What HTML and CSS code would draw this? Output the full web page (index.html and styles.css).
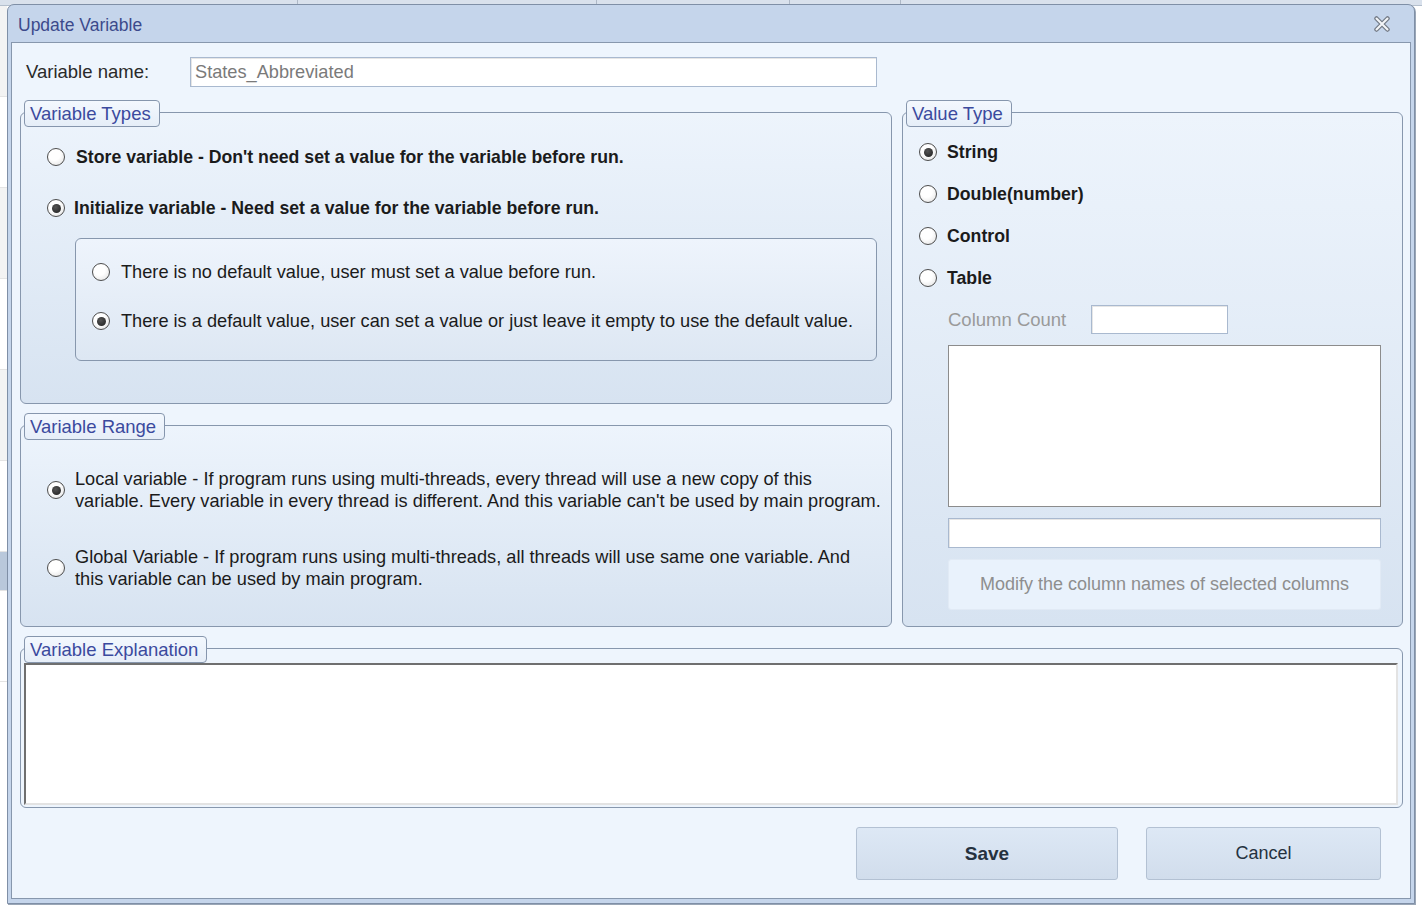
FILE: index.html
```html
<!DOCTYPE html>
<html lang="en">
<head>
    <meta charset="UTF-8">
    <title>Update Variable</title>
    <link rel="stylesheet" href="styles.css">
</head>
<body>
    <div class="backdrop">
        <div class="bg-head">
            <span class="bg-col c1"></span>
            <span class="bg-col c2"></span>
            <span class="bg-col c3"></span>
            <span class="bg-col c4"></span>
        </div>
        <div class="bg-rows">
            <div class="bg-row alt"></div>
            <div class="bg-row"></div>
            <div class="bg-row alt"></div>
            <div class="bg-row"></div>
            <div class="bg-row alt"></div>
            <div class="bg-row"></div>
            <div class="bg-row sel"></div>
            <div class="bg-row"></div>
        </div>
    </div>

    <div class="dialog">
        <div class="titlebar">
            <span class="title">Update Variable</span>
            <svg class="close" width="18" height="16" viewBox="0 0 18 16">
                <path d="M3.5 2.5 L14.5 13.5 M14.5 2.5 L3.5 13.5" stroke="#737a85" stroke-width="4.5" stroke-linecap="round"/>
                <path d="M3.5 2.5 L14.5 13.5 M14.5 2.5 L3.5 13.5" stroke="#f4f6f9" stroke-width="2" stroke-linecap="round"/>
            </svg>
        </div>

        <div class="client">
            <div class="name-row">
                <label class="name-label">Variable name:</label>
                <div class="text-input name-input">States_Abbreviated</div>
            </div>

            <div class="main-grid">
                <div class="left-col">
                    <div class="group types">
                        <div class="legend">Variable Types</div>
                        <div class="opt bold"><span class="radio"></span>Store variable - Don't need set a value for the variable before run.</div>
                        <div class="opt bold second"><span class="radio on"></span>Initialize variable - Need set a value for the variable before run.</div>
                        <div class="inner-box">
                            <div class="opt"><span class="radio"></span>There is no default value, user must set a value before run.</div>
                            <div class="opt second-sub"><span class="radio on"></span>There is a default value, user can set a value or just leave it empty to use the default value.</div>
                        </div>
                    </div>

                    <div class="group range">
                        <div class="legend">Variable Range</div>
                        <div class="opt wrap"><span class="radio on"></span><span class="lines">Local variable - If program runs using multi-threads, every thread will use a new copy of this<br>variable. Every variable in every thread is different. And this variable can't be used by main program.</span></div>
                        <div class="opt wrap second-range"><span class="radio"></span><span class="lines">Global Variable - If program runs using multi-threads, all threads will use same one variable. And<br>this variable can be used by main program.</span></div>
                    </div>
                </div>

                <div class="group value-type">
                    <div class="legend">Value Type</div>
                    <div class="opt bold vt"><span class="radio on"></span>String</div>
                    <div class="opt bold vt"><span class="radio"></span>Double(number)</div>
                    <div class="opt bold vt"><span class="radio"></span>Control</div>
                    <div class="opt bold vt"><span class="radio"></span>Table</div>
                    <div class="col-count">
                        <span class="muted">Column Count</span>
                        <div class="text-input count-input"></div>
                    </div>
                    <div class="list-box"></div>
                    <div class="text-input col-name"></div>
                    <div class="flat-btn">Modify the column names of selected columns</div>
                </div>
            </div>

            <div class="group explain">
                <div class="legend">Variable Explanation</div>
                <div class="text-area"></div>
            </div>

            <div class="buttons">
                <button class="btn save">Save</button>
                <button class="btn cancel">Cancel</button>
            </div>
        </div>
    </div>
</body>
</html>
```

FILE: styles.css
```css
body {
    margin: 0;
    padding: 4px 0 0 7px;
    font-family: "Liberation Sans", Arial, sans-serif;
    background: #ffffff;
    color: #1b1b1b;
    position: relative;
    height: 910px;
    overflow: hidden;
}
.backdrop {
    position: absolute;
    top: 0;
    left: 0;
    width: 1422px;
    height: 914px;
}
.bg-head {
    display: flex;
    height: 5px;
    background: #d9e1ec;
    border-bottom: 1px solid #b4bfcd;
}
.bg-col {
    border-right: 1px solid #aeb8c6;
}
.bg-col.c1 { width: 297px; }
.bg-col.c2 { width: 298px; }
.bg-col.c3 { width: 192px; }
.bg-col.c4 { width: 110px; }
.bg-rows {
    width: 7px;
}
.bg-row {
    height: 90px;
    background: #ffffff;
    border-bottom: 1px solid #e4e4e4;
}
.bg-row.alt {
    background: #f3f3f3;
}
.bg-row.sel {
    height: 38px;
    background: #b9c8db;
}
.dialog {
    position: relative;
    width: 1408px;
    height: 900px;
    box-sizing: border-box;
    border: 1px solid #7f8fa6;
    border-radius: 7px 7px 0 0;
    background: #c5d5eb;
    padding: 0 3px 4px 3px;
    display: flex;
    flex-direction: column;
    box-shadow: 1px 1px 0 #9aa6b6;
}
.titlebar {
    height: 37px;
    flex: none;
    display: flex;
    align-items: center;
    justify-content: space-between;
    padding: 3px 20px 0 7px;
    box-sizing: border-box;
}
.title {
    font-size: 17.5px;
    color: #3c4a8c;
}
.close {
    margin-top: -2px;
}
.client {
    flex: 1;
    border: 1px solid #8797ad;
    background: #eef5fd;
    padding: 0 7px 0 8px;
    display: flex;
    flex-direction: column;
}
.name-row {
    display: flex;
    align-items: center;
    margin-top: 14px;
    padding-left: 6px;
    height: 30px;
}
.name-label {
    width: 164px;
    font-size: 18.5px;
    color: #2a2a2a;
}
.text-input {
    box-sizing: border-box;
    background: #ffffff;
    border: 1px solid #a9b9cf;
    box-shadow: inset 1px 1px 0 #e6e6e6;
}
.name-input {
    width: 687px;
    height: 30px;
    padding: 0 4px;
    line-height: 28px;
    font-size: 18.2px;
    color: #7a7a7a;
}
.main-grid {
    display: grid;
    grid-template-columns: 872px 1fr;
    column-gap: 10px;
    margin-top: 25px;
}
.left-col {
    display: flex;
    flex-direction: column;
    gap: 21px;
}
.group {
    position: relative;
    box-sizing: border-box;
    border: 1px solid #8797ad;
    border-radius: 6px;
    background: linear-gradient(#edf4fc, #d7e3f1);
}
.legend {
    position: absolute;
    top: -13px;
    left: 3px;
    height: 27px;
    box-sizing: border-box;
    padding: 0 8px 0 5px;
    border: 1px solid #8696ad;
    border-radius: 4px;
    background: linear-gradient(#f3f8fe, #e6eef8);
    color: #3b4a9e;
    font-size: 18.5px;
    line-height: 25px;
    white-space: nowrap;
}
.opt {
    display: flex;
    align-items: center;
    height: 22px;
    font-size: 18.2px;
    white-space: nowrap;
    gap: 11px;
}
.opt.bold {
    font-weight: bold;
    font-size: 17.7px;
}
.radio {
    flex: none;
    width: 18px;
    height: 18px;
    box-sizing: border-box;
    border: 1.5px solid #4d4d4d;
    border-radius: 50%;
    background: radial-gradient(circle at 40% 35%, #ffffff 40%, #dedede);
    display: flex;
    align-items: center;
    justify-content: center;
}
.radio.on::after {
    content: "";
    width: 9px;
    height: 9px;
    border-radius: 50%;
    background: radial-gradient(circle at 40% 35%, #555555, #1d1d1d);
}
.types {
    height: 292px;
    padding: 33px 14px 0 26px;
}
.types .second {
    margin-top: 29px;
}
.types .second {
    gap: 9px;
}
.inner-box {
    margin: 19px 0 0 28px;
    height: 123px;
    box-sizing: border-box;
    border: 1px solid #8797ad;
    border-radius: 6px;
    background: linear-gradient(#eef4fc, #dde7f3);
    padding: 22px 0 0 16px;
}
.inner-box .second-sub {
    margin-top: 27px;
}
.range {
    height: 202px;
    padding: 42px 0 0 26px;
}
.opt.wrap {
    height: 44px;
    gap: 10px;
}
.lines {
    line-height: 22px;
}
.range .second-range {
    margin-top: 34px;
}
.value-type {
    padding: 28px 21px 0 16px;
}
.opt.vt {
    gap: 10px;
    margin-bottom: 20px;
}
.col-count {
    display: flex;
    align-items: center;
    margin: -4px 0 0 29px;
    height: 29px;
}
.muted {
    width: 143px;
    font-size: 18.5px;
    color: #9a9a9a;
    white-space: nowrap;
}
.count-input {
    width: 137px;
    height: 29px;
}
.list-box {
    margin: 11px 0 0 29px;
    height: 162px;
    box-sizing: border-box;
    background: #ffffff;
    border: 1px solid #8c8c8c;
}
.col-name {
    margin: 11px 0 0 29px;
    height: 30px;
}
.flat-btn {
    margin: 11px 0 0 29px;
    height: 51px;
    border-radius: 3px;
    background: #e9f2fc;
    border: 1px solid #e1eaf5;
    box-sizing: border-box;
    display: flex;
    align-items: center;
    justify-content: center;
    font-size: 18px;
    color: #8e8e8e;
    white-space: nowrap;
}
.explain {
    margin-top: 21px;
    height: 160px;
    padding: 14px 4px 2px 3px;
    background: #eef5fd;
}
.text-area {
    height: 100%;
    box-sizing: border-box;
    background: #ffffff;
    border: 2px solid;
    border-color: #6f6f6f #e3e3e3 #e3e3e3 #6f6f6f;
}
.buttons {
    display: flex;
    justify-content: flex-end;
    gap: 28px;
    margin-top: 19px;
    padding-right: 22px;
}
.btn {
    height: 53px;
    border: 1px solid #b3c1d3;
    border-radius: 3px;
    background: linear-gradient(#dde8f5, #d1ddec);
    font-family: "Liberation Sans", Arial, sans-serif;
    color: #25323f;
    cursor: pointer;
}
.save {
    width: 262px;
    font-size: 19px;
    font-weight: bold;
}
.cancel {
    width: 235px;
    font-size: 18px;
}
```
